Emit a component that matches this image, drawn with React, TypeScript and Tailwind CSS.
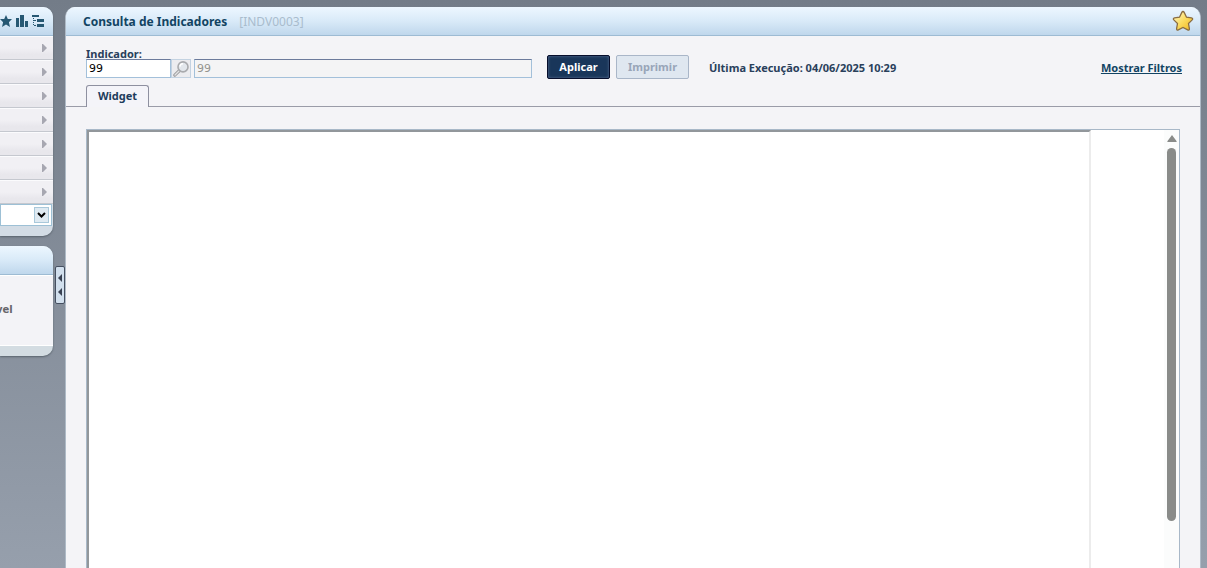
import React from "react";

const menuItems = ["Cadastros", "Movimentos", "Consultas", "Relatórios", "Processos", "Indicadores", "Utilitários"];

const headerClass =
  "flex h-[29px] shrink-0 items-center border-b border-[#9dbbd3] bg-linear-to-b from-[#edf7ff] via-[#d9eaf8] to-[#bfd7ec]";

function Sidebar() {
  return (
    <aside className="flex w-[53px] shrink-0 flex-col gap-[10px]">
      <nav className="overflow-hidden rounded-tr-[10px] rounded-br-[10px] bg-[#d3dce5] pb-[10px] shadow-[0_1px_2px_#59636d]">
        <div className={headerClass + " gap-[3px]"}>
          <button aria-label="Favoritos" className="h-3 w-3">
            <svg viewBox="0 0 12 12" className="h-3 w-3">
              <path d="M6 0l1.8 4H12L8.900 7.200 10 12 6 9.400 2 12l1.100-4.800L0 4h4.200z" fill="#265873" />
            </svg>
          </button>
          <button aria-label="Indicadores" className="ml-px h-3 w-3">
            <svg viewBox="0 0 12 12" className="h-3 w-3" fill="#265873">
              <path d="M0 3h3v9H0zM4 0h4v12H4zM9 6h3v6H9z" />
            </svg>
          </button>
          <button aria-label="Estrutura" className="ml-px h-3 w-3">
            <svg viewBox="0 0 12 12" className="h-3 w-3" fill="#265873">
              <path d="M0 0h7v2H0zM1 3h1v1H1zM1 5h3v1H1zM1 7h1v1H1zM1 9h1v1H1zM2 10h2v1H2zM5 4h7v3H5zM5 9h7v3H5z" />
            </svg>
          </button>
        </div>
        <ul>
          {menuItems.map((item) => (
            <li key={item} className="border-b border-[#c5c8cf]">
              <button
                aria-label={item}
                className="flex h-[23px] w-full items-center justify-end border-t border-[#fbfbfd] bg-linear-to-b from-[#f1f0f4] from-50% to-[#e8e7ec] to-80% pr-[6px]"
              >
                <svg viewBox="0 0 5 8" className="h-2 w-[5px]">
                  <path d="M0 0h1l4 4-4 4H0z" fill="#a7a7b1" />
                </svg>
              </button>
            </li>
          ))}
        </ul>
        <div className="mr-px grid h-[22px] grid-rows-1 border border-[#9dc0d5] bg-white">
          <select aria-label="Módulo" className="col-start-1 row-start-1 h-5 w-full appearance-none bg-white text-[11px]" />
          <span className="pointer-events-none col-start-1 row-start-1 mr-[2px] flex h-4 w-[15px] items-center justify-center self-center justify-self-end border border-[#a9c8da] bg-[#dfeaf2]">
            <svg viewBox="0 0 9 6" className="h-[6px] w-[9px]">
              <path d="M1 1l3.5 3.5L8 1" fill="none" stroke="#000" strokeWidth="2" />
            </svg>
          </span>
        </div>
      </nav>
      <section className="overflow-hidden rounded-tr-[10px] rounded-br-[10px] bg-[#d3dce2] pb-[10px] shadow-[0_1px_2px_#59636d]">
        <div className={headerClass} />
        <div className="flex h-[71px] items-center border-y border-white bg-[#f3f3f7] pb-[2px] font-bold text-[#66666b]">
          <span className="-ml-1 text-[10px]">vel</span>
        </div>
      </section>
    </aside>
  );
}

function Collapser() {
  return (
    <button
      aria-label="Recolher menu"
      className="mx-[2px] mt-[259px] flex h-[38px] w-[10px] shrink-0 flex-col items-center justify-center gap-[6px] rounded-[2px] border border-[#454f60] bg-[#d1dfed]"
    >
      {[0, 1].map((n) => (
        <svg key={n} viewBox="0 0 4 8" className="h-2 w-1">
          <path d="M4 0v8L0 4z" fill="#384152" />
        </svg>
      ))}
    </button>
  );
}

function Magnifier() {
  return (
    <svg viewBox="0 0 16 16" className="h-4 w-4">
      <path d="M1.800 14.200l4.700-4.700" stroke="#a0a0a2" strokeWidth="3.200" strokeLinecap="round" />
      <path d="M2 14l4.500-4.500" stroke="#e2e2e3" strokeWidth="1.200" strokeLinecap="round" />
      <circle cx="10" cy="5.900" r="5" fill="#e3e7ec" stroke="#a9aaad" strokeWidth="1.600" />
      <path d="M7 5.600a3 3 0 0 1 3-2.800" fill="none" stroke="#fff" strokeWidth="1.400" />
    </svg>
  );
}

function GoldStar() {
  return (
    <svg viewBox="0 0 22 22" className="h-[22px] w-[22px]">
      <defs>
        <linearGradient id="gold" x1="0" y1="0" x2="1" y2="1">
          <stop offset="0" stopColor="#fff8cf" />
          <stop offset=".5" stopColor="#fbdc61" />
          <stop offset="1" stopColor="#eeb41c" />
        </linearGradient>
      </defs>
      <path
        d="M11 1.500c.7 0 1 .5 1.300 1.100l2.200 4.600 5 .7c1.200.2 1.500 1.200.7 2l-3.700 3.600.9 5.100c.2 1.200-.7 1.800-1.700 1.300L11 17.500l-4.700 2.400c-1 .5-1.900-.1-1.700-1.300l.9-5.100L1.800 9.900c-.8-.8-.5-1.800.7-2l5-.7 2.200-4.600c.3-.6.600-1.100 1.300-1.100z"
        fill="url(#gold)"
        stroke="#8a6d42"
        strokeWidth="1.300"
      />
    </svg>
  );
}

export default function App() {
  return (
    <div className="flex h-screen overflow-hidden bg-linear-to-b from-[#737c88] to-[#969fac] pr-[6px] pt-[7px] font-['DejaVu_Sans',Verdana,sans-serif] text-[#29405b]">
      <Sidebar />
      <Collapser />
      <main className="-ml-[2px] flex min-w-0 flex-1 flex-col overflow-hidden rounded-t-[10px] border-x border-[#aebac6] bg-[#f4f4f7]">
        <header className={headerClass + " justify-between pl-[17px] pr-[6px]"}>
          <div className="flex items-center gap-3 pt-px font-['Noto_Sans',sans-serif] text-xs">
            <h1 className="font-bold text-[#124463]">Consulta de Indicadores</h1>
            <span className="text-[#a9bccd]">[INDV0003]</span>
          </div>
          <button aria-label="Adicionar aos favoritos">
            <GoldStar />
          </button>
        </header>

        <form
          className="flex h-[49px] shrink-0 items-start px-5 pt-3 font-['Noto_Sans',sans-serif] text-[11px]"
          onSubmit={(e) => e.preventDefault()}
        >
          <div>
            <label htmlFor="indicador" className="block h-[11px] leading-3 font-bold">
              Indicador:
            </label>
            <div className="flex h-[19px] font-['DejaVu_Sans',Verdana,sans-serif]">
              <input
                id="indicador"
                defaultValue="99"
                className="w-[85px] border border-[#a3c0da] border-t-[#6c7b9c] bg-white px-[2px] pt-[2px] text-black"
              />
              <button
                type="button"
                aria-label="Pesquisar indicador"
                className="flex w-[20px] items-center justify-center border border-[#c3d2e1] bg-[#ececef]"
              >
                <Magnifier />
              </button>
              <input
                aria-label="Descrição do indicador"
                value="99"
                disabled
                className="ml-[3px] w-[338px] border border-[#a3c0da] border-t-[#6c7b9c] bg-[#f4f4f5] px-[2px] pt-[2px] text-[#94948f]"
              />
            </div>
          </div>
          <div className="mt-[7px] ml-[15px] flex items-center gap-[6px] font-bold">
            <button
              type="submit"
              className="h-6 w-[63px] rounded-[2px] border border-[#060e2c] bg-[#19365a] text-white shadow-[inset_0_0_3px_#5b7095]"
            >
              Aplicar
            </button>
            <button
              type="button"
              disabled
              className="h-6 w-[73px] rounded-[2px] border border-[#a9b6c8] bg-[#dfe7f0] text-[#98a5b8]"
            >
              Imprimir
            </button>
            <span className="ml-[14px] pt-[3px] whitespace-nowrap">Última Execução: 04/06/2025 10:29</span>
          </div>
          <a
            href="#filtros"
            className="mt-[12px] mr-[-2px] ml-auto leading-4 font-bold whitespace-nowrap text-[#124463] underline"
          >
            Mostrar Filtros
          </a>
        </form>

        <div role="tablist" className="flex h-[22px] shrink-0 border-b border-[#9a9ca8] pl-5">
          <button
            role="tab"
            aria-selected="true"
            className="-mb-px h-[22px] w-[63px] rounded-t-[3px] border border-b-0 border-[#8e90a0] bg-[#f4f4f9] font-['Noto_Sans',sans-serif] text-[11px] font-bold text-[#1d3c5c]"
          >
            Widget
          </button>
        </div>

        <section className="mx-5 mt-[22px] flex min-h-0 flex-1 border border-b-0 border-[#a8b8c8] bg-white">
          <div className="min-w-0 flex-1 border-t-2 border-r-2 border-l-2 border-t-[#92979b] border-r-[#ececec] border-l-[#92979b]" />
          <div className="flex w-[88px] shrink-0 justify-end">
            <div className="flex w-[15px] flex-col items-center bg-[#fbfcfc] pt-[5px]">
              <svg viewBox="0 0 10 7" className="h-[7px] w-[10px]">
                <path d="M5 0L9.500 6a.6.6 0 0 1-.5 1H1a.6.6 0 0 1-.5-1z" fill="#898b89" />
              </svg>
              <div className="mt-[6px] h-[373px] w-[9px] rounded-full bg-[#898b89]" />
            </div>
          </div>
        </section>
      </main>
    </div>
  );
}
